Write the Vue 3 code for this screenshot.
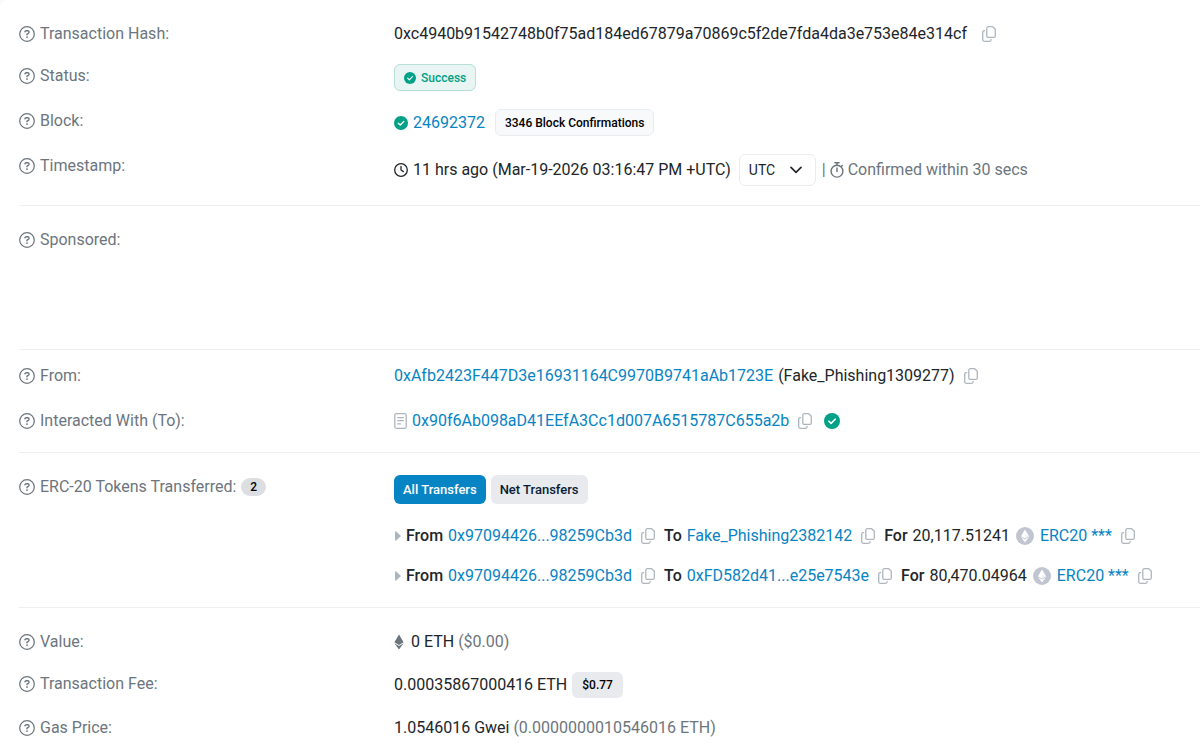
<script setup>
import { h, ref } from 'vue'

const zone = ref('UTC')
const activeTab = ref('all')
const tabs = [
  { id: 'all', label: 'All Transfers' },
  { id: 'net', label: 'Net Transfers' },
]

const transfers = [
  { from: '0x97094426...98259Cb3d', to: 'Fake_Phishing2382142', amount: '20,117.51241', token: 'ERC20 ***' },
  { from: '0x97094426...98259Cb3d', to: '0xFD582d41...e25e7543e', amount: '80,470.04964', token: 'ERC20 ***' },
]

const HelpIcon = () =>
  h(
    'svg',
    {
      viewBox: '0 0 16 16', width: 16, height: 16, fill: 'none', stroke: 'currentColor',
      'stroke-linecap': 'round', 'stroke-linejoin': 'round', 'aria-hidden': 'true',
    },
    [
      h('circle', { cx: 8, cy: 8, r: 7.3, 'stroke-width': 1.25 }),
      h('path', { 'stroke-width': 1.35, d: 'M5.9 5.8c.2-.7.8-1.1 1.4-1.1h1.3c.9 0 1.5.6 1.5 1.4 0 .6-.3 1-.8 1.3L8 8.1v.6' }),
      h('circle', { cx: 8, cy: 11.1, r: 0.9, fill: 'currentColor', stroke: 'none' }),
    ]
  )

const CopyIcon = () =>
  h(
    'svg',
    {
      viewBox: '0 0 14 16', width: 14, height: 16, fill: 'none', stroke: 'currentColor',
      'stroke-width': 1.3, 'stroke-linecap': 'round', 'stroke-linejoin': 'round', 'aria-hidden': 'true',
    },
    [
      h('path', { d: 'M6.3.7h4.4l2.6 2.6v6.6a1.5 1.5 0 0 1-1.5 1.5H6.3a1.5 1.5 0 0 1-1.5-1.5V2.2A1.5 1.5 0 0 1 6.3.7z' }),
      h('path', { d: 'M2.6 4.7h-.4A1.5 1.5 0 0 0 .7 6.2v7.6a1.5 1.5 0 0 0 1.5 1.5h5.4a1.5 1.5 0 0 0 1.5-1.5v-.3' }),
    ]
  )

const CheckIcon = (props) =>
  h('svg', { viewBox: '0 0 16 16', width: props.size, height: props.size, 'aria-hidden': 'true' }, [
    h('circle', { cx: 8, cy: 8, r: 8, fill: '#00a186' }),
    h('path', {
      d: 'M4.9 8.2l2.2 2.2 4.1-4.2', fill: 'none', stroke: '#fff', 'stroke-width': 1.6,
      'stroke-linecap': 'round', 'stroke-linejoin': 'round',
    }),
  ])
CheckIcon.props = ['size']
</script>

<template>
  <main class="card">
    <section class="group">
      <div class="row">
        <div class="label"><HelpIcon />Transaction Hash:</div>
        <div class="value">
          <span>0xc4940b91542748b0f75ad184ed67879a70869c5f2de7fda4da3e753e84e314cf</span>
          <button class="copy wide" aria-label="Copy hash"><CopyIcon /></button>
        </div>
      </div>
      <div class="row">
        <div class="label"><HelpIcon />Status:</div>
        <div class="value">
          <span class="badge success"><CheckIcon :size="12" />Success</span>
        </div>
      </div>
      <div class="row">
        <div class="label"><HelpIcon />Block:</div>
        <div class="value">
          <CheckIcon :size="14" />
          <a href="#">24692372</a>
          <span class="badge outline">3346 Block Confirmations</span>
        </div>
      </div>
      <div class="row">
        <div class="label"><HelpIcon />Timestamp:</div>
        <div class="value">
          <svg viewBox="0 0 14 14" width="14" height="14" fill="none" stroke="currentColor" stroke-width="1.3" stroke-linecap="round" stroke-linejoin="round" aria-hidden="true">
            <circle cx="7" cy="7" r="6.3" />
            <path d="M7 3.4V7l2.4 1.6" />
          </svg>
          <span>11 hrs ago (Mar-19-2026 03:16:47 PM +UTC)</span>
          <span class="zone">
            <select v-model="zone" aria-label="Time zone">
              <option>UTC</option>
              <option>Local</option>
            </select>
            <svg class="chevron" viewBox="0 0 12 8" width="12" height="8" fill="none" stroke="currentColor" stroke-width="1.6" stroke-linecap="round" stroke-linejoin="round" aria-hidden="true">
              <path d="M1 1.4l5 5 5-5" />
            </svg>
          </span>
          <span class="muted confirm">
            <span>|</span>
            <svg viewBox="0 0 14 16" width="14" height="16" fill="none" stroke="currentColor" stroke-width="1.4" stroke-linecap="round" aria-hidden="true">
              <circle cx="7" cy="9.2" r="5.9" />
              <path d="M4.9.8h4.2M7 .8v2.4M7 6v3.6M11.3 4.6l1.1-1.1" />
            </svg>
            <span>Confirmed within 30 secs</span>
          </span>
        </div>
      </div>
    </section>

    <section class="group sponsored">
      <div class="row">
        <div class="label"><HelpIcon />Sponsored:</div>
      </div>
    </section>

    <section class="group parties">
      <div class="row">
        <div class="label"><HelpIcon />From:</div>
        <div class="value">
          <a href="#">0xAfb2423F447D3e16931164C9970B9741aAb1723E</a>
          <span>(Fake_Phishing1309277)</span>
          <button class="copy" aria-label="Copy sender"><CopyIcon /></button>
        </div>
      </div>
      <div class="row">
        <div class="label"><HelpIcon />Interacted With (To):</div>
        <div class="value">
          <svg class="faint" viewBox="0 0 13 16" width="13" height="16" fill="none" stroke="currentColor" stroke-width="1.3" stroke-linecap="round" aria-hidden="true">
            <rect x="0.8" y="0.7" width="11.4" height="14.6" rx="1.5" />
            <path d="M3.7 4.6h5.6M3.7 7.7h5.6M3.7 10.9h2.8" />
          </svg>
          <a href="#">0x90f6Ab098aD41EEfA3Cc1d007A6515787C655a2b</a>
          <button class="copy" aria-label="Copy contract address"><CopyIcon /></button>
          <span class="verified"><CheckIcon :size="16" /></span>
        </div>
      </div>
    </section>

    <section class="group">
      <div class="row">
        <div class="label"><HelpIcon />ERC-20 Tokens Transferred: <span class="count">2</span></div>
        <div class="transfers">
          <div class="tabs">
            <button
              v-for="tab in tabs"
              :key="tab.id"
              class="tab"
              :class="{ active: activeTab === tab.id }"
              @click="activeTab = tab.id"
            >{{ tab.label }}</button>
          </div>
          <div v-for="(t, i) in transfers" :key="i" class="value transfer">
            <svg class="faint caret" viewBox="0 0 6 10" width="6" height="10" fill="currentColor" aria-hidden="true">
              <path d="M0 .9C0 .2.7-.1 1.2.4l4.3 4c.4.4.4.8 0 1.2l-4.3 4C.7 10.1 0 9.8 0 9.1z" />
            </svg>
            <b>From</b>
            <a href="#">{{ t.from }}</a>
            <button class="copy" aria-label="Copy from address"><CopyIcon /></button>
            <b>To</b>
            <a href="#">{{ t.to }}</a>
            <button class="copy" aria-label="Copy to address"><CopyIcon /></button>
            <b>For</b>
            <span>{{ t.amount }}</span>
            <svg class="token" viewBox="0 0 18 18" width="18" height="18" aria-hidden="true">
              <circle cx="9" cy="9" r="9" fill="#c0c5d1" />
              <path d="M9 2.4L5 9.2l4 2.3 4-2.3z" fill="#fff" />
              <path d="M5 10.1l4 5.5 4-5.5-4 2.3z" fill="#fff" />
              <path d="M9 7.3v4.2l4-2.3z" fill="#f0f2f6" />
            </svg>
            <a href="#">{{ t.token }}</a>
            <button class="copy" aria-label="Copy token address"><CopyIcon /></button>
          </div>
        </div>
      </div>
    </section>

    <section class="group fees">
      <div class="row">
        <div class="label"><HelpIcon />Value:</div>
        <div class="value">
          <svg class="eth" viewBox="0 0 10 16" width="10" height="16" fill="#6c757d" aria-hidden="true">
            <path d="M5 .5L.4 8.2 5 10.9l4.6-2.7z" />
            <path d="M.4 9.3L5 15.6l4.6-6.3L5 12z" />
          </svg>
          <span>0 ETH <span class="muted">($0.00)</span></span>
        </div>
      </div>
      <div class="row">
        <div class="label"><HelpIcon />Transaction Fee:</div>
        <div class="value">
          <span>0.00035867000416 ETH</span>
          <span class="badge price">$0.77</span>
        </div>
      </div>
      <div class="row">
        <div class="label"><HelpIcon />Gas Price:</div>
        <div class="value">
          <span>1.0546016 Gwei <span class="muted">(0.0000000010546016 ETH)</span></span>
        </div>
      </div>
    </section>
  </main>
</template>

<style>
body {
  margin: 0;
  background: #f8f9fa;
}
</style>

<style scoped>
.card {
  background: #fff;
  border-top-left-radius: 8px;
  padding-left: 19px;
  font-family: Roboto, "Liberation Sans", sans-serif;
  font-size: 16px;
  line-height: 24px;
  color: #212529;
  white-space: nowrap;
  overflow: hidden;
}
.group {
  display: flex;
  flex-direction: column;
  gap: 18px;
  padding: 22px 0 19px;
  border-bottom: 1px solid #eceef0;
}
.group:last-child {
  border-bottom: 0;
}
.sponsored {
  min-height: 102px;
}
.parties {
  gap: 21px;
  padding-top: 14px;
}
.row {
  display: grid;
  grid-template-columns: 375px 1fr;
  align-items: start;
}
.label,
.value {
  display: flex;
  align-items: center;
  gap: 5px;
}
.label,
.muted {
  color: #6c757d;
}
a {
  color: #0784c3;
  text-decoration: none;
}
b {
  font-weight: 500;
}
svg {
  display: block;
  flex: none;
}
button {
  font: inherit;
  border: 0;
  padding: 0;
  background: none;
  cursor: pointer;
}
.faint {
  color: #adb5bd;
}
.copy {
  color: #adb5bd;
  margin: 0 4px;
}
.copy.wide {
  margin-left: 10px;
}
.verified {
  margin-left: 3px;
}
.badge {
  box-sizing: border-box;
  display: inline-flex;
  align-items: center;
  gap: 5px;
  height: 27px;
  padding: 0 9px;
  border: 1px solid transparent;
  border-radius: 6px;
  font-size: 12px;
  font-weight: 500;
  color: #000;
}
.success {
  color: #00a186;
  background: #e8f5f2;
  border-color: #b5dfd7;
}
.outline {
  margin-left: 5px;
  background: #f8f9fa;
  border-color: #e9ecef;
}
.price {
  height: 26px;
  background: #e9eaee;
}
.zone {
  display: grid;
  align-items: center;
  margin: 0 1px 0 3px;
}
.zone > * {
  grid-area: 1 / 1;
}
.zone select {
  appearance: none;
  box-sizing: border-box;
  width: 77px;
  height: 32px;
  padding: 0 9px;
  border: 1px solid #e9ecef;
  border-radius: 6px;
  background: #fff;
  color: #212529;
  font: inherit;
  font-size: 14px;
}
.chevron {
  justify-self: end;
  margin-right: 14px;
  pointer-events: none;
}
.confirm {
  display: flex;
  align-items: center;
  gap: 4px;
}
.count {
  padding: 0 9px;
  border-radius: 9px;
  background: #dcdee2;
  color: #000;
  font-size: 12px;
  font-weight: 500;
  line-height: 18px;
}
.tabs {
  display: flex;
  gap: 5px;
  margin-bottom: 20px;
}
.tab {
  height: 29px;
  padding: 0 9px;
  border-radius: 6px;
  background: #e9eaee;
  color: #081d35;
  font-size: 13px;
  font-weight: 500;
}
.tab.active {
  background: #0784c3;
  color: #fff;
}
.transfer + .transfer {
  margin-top: 16px;
}
.caret {
  margin-left: 1px;
}
.token {
  margin: 0 1px;
}
.eth {
  margin-right: 2px;
}
</style>
